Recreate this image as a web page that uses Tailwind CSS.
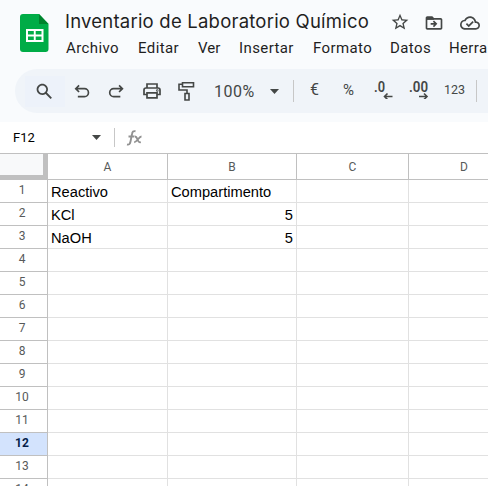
<!DOCTYPE html>
<html lang="es">
<head>
<meta charset="utf-8">
<title>Inventario de Laboratorio Químico</title>
<script src="https://cdn.jsdelivr.net/npm/@tailwindcss/browser@4"></script>
</head>
<body class="w-[488px] h-[486px] overflow-hidden bg-[#f9fbfd] font-['Liberation_Sans',Arial,sans-serif]">
<div class="flex h-[486px] w-[488px] flex-col overflow-hidden">
  <header class="flex h-[69px] shrink-0">
    <svg class="ml-5 mt-[14px] h-[38px] w-[29px] shrink-0" viewBox="0 0 29 38">
      <path d="M3 0H19L28.500 10V35a3 3 0 0 1-3 3H3a3 3 0 0 1-3-3V3a3 3 0 0 1 3-3z" fill="#00ac47"/>
      <path d="M19 0L28.500 10H19z" fill="#00832d"/>
      <path d="M6 15H23.500V28H6zM8 17V20.500H13.800V17zM15.700 17V20.500H21.500V17zM8 22.500V26H13.800V22.500zM15.700 22.500V26H21.500V22.500z" fill="#fff" fill-rule="evenodd"/>
    </svg>
    <div class="ml-4 flex flex-col">
      <div class="mt-[9px] flex h-6 items-center text-[#444746]">
        <h1 class="w-[325px] whitespace-nowrap text-[18.500px] leading-6 tracking-[0.22px] text-[#1f1f1f] font-[Inter,sans-serif]">Inventario de Laboratorio Químico</h1>
        <svg class="mt-0.5 h-5 w-5 shrink-0" viewBox="0 0 24 24" fill="currentColor"><path d="M22 9.240l-7.190-.62L12 2 9.190 8.630 2 9.240l5.460 4.730L5.820 21 12 17.270 18.180 21l-1.630-7.030L22 9.240zM12 15.400l-3.760 2.270 1-4.280-3.320-2.880 4.380-.38L12 6.100l1.710 4.040 4.380.38-3.320 2.880 1 4.280L12 15.400z"/></svg>
        <svg class="ml-[14px] mt-[3px] h-5 w-5 shrink-0" viewBox="0 0 24 24" fill="currentColor"><path d="M20 6h-8l-2-2H4c-1.100 0-2 .9-2 2v12c0 1.100.9 2 2 2h16c1.100 0 2-.9 2-2V8c0-1.100-.9-2-2-2zm0 12H4V8h16v10zm-8-1l4-4-4-4-1.410 1.410L12.170 12H8v2h4.170l-1.580 1.590L12 17z"/><path d="M3 5h7l2 2v1H3z"/></svg>
        <svg class="ml-4 mt-[3px] h-5 w-5 shrink-0" viewBox="0 0 24 24" fill="currentColor"><path d="M19.350 10.040C18.670 6.590 15.640 4 12 4 9.110 4 6.600 5.640 5.350 8.040 2.340 8.360 0 10.910 0 14c0 3.310 2.690 6 6 6h13c2.760 0 5-2.240 5-5 0-2.640-2.050-4.780-4.650-4.960zM19 18H6c-2.210 0-4-1.790-4-4 0-2.050 1.530-3.760 3.560-3.970l1.070-.11.5-.95C8.080 7.140 9.940 6 12 6c2.620 0 4.880 1.860 5.390 4.430l.3 1.500 1.530.11c1.560.1 2.780 1.410 2.780 2.960 0 1.650-1.350 3-3 3zM10.500 14.170l-2.090-2.090L7 13.500l3.500 3.500 6.010-6.010-1.410-1.410z"/></svg>
      </div>
      <nav class="mt-[5px] flex h-5 items-center whitespace-nowrap pl-px text-[15px] leading-5 text-[#1f1f1f] font-[Roboto,sans-serif]">
        <span class="w-[72px] tracking-[0.4px]">Archivo</span>
        <span class="w-[60px] tracking-[0.4px]">Editar</span>
        <span class="w-[41px]">Ver</span>
        <span class="w-[74px] tracking-[0.4px]">Insertar</span>
        <span class="w-[77px] tracking-[0.4px]">Formato</span>
        <span class="w-[59px] tracking-[0.4px]">Datos</span>
        <span class="tracking-[0.35px]">Herra</span>
      </nav>
    </div>
  </header>

  <div class="ml-[15px] flex h-11 w-[600px] shrink-0 items-center rounded-l-full bg-[#f0f4f9] text-[#444746]">
    <div class="ml-[10px] flex h-[31px] w-10 items-center justify-center bg-[#edf2fa]">
      <svg class="ml-[-2px] h-[21px] w-[21px]" viewBox="0 0 24 24" fill="currentColor"><path d="M20.490 19l-5.730-5.730C15.530 12.200 16 10.910 16 9.500 16 5.910 13.090 3 9.500 3S3 5.910 3 9.500 5.910 16 9.500 16c1.410 0 2.700-.47 3.770-1.240L19 20.490 20.490 19zM5 9.500C5 7.010 7.010 5 9.500 5S14 7.010 14 9.500 11.990 14 9.500 14 5 11.990 5 9.500z"/></svg>
    </div>
    <svg class="ml-[7px] mt-0.5 h-5 w-5 shrink-0" viewBox="0 0 24 24" fill="none" stroke="currentColor" stroke-width="2"><path d="M8.500 4L4.500 8l4 4M5 8h10a4.500 4.500 0 0 1 0 9.500H7"/></svg>
    <svg class="ml-[15px] mt-0.5 h-5 w-5 shrink-0" viewBox="0 0 24 24" fill="none" stroke="currentColor" stroke-width="2"><path d="M14.500 4l4 4-4 4M18 8H8a4.500 4.500 0 0 0 0 9.500h8"/></svg>
    <svg class="ml-[15px] h-5 w-5 shrink-0" viewBox="0 0 20 20" fill="none" stroke="currentColor" stroke-width="1.700"><path d="M5 6.500V3h10v3.500M5 13.500H2V9a2 2 0 0 1 2-2h12a2 2 0 0 1 2 2v4.500h-3M5 11.800h10v5H5z"/><circle cx="15.300" cy="9.500" r=".4"/></svg>
    <svg class="ml-[14px] h-5 w-5 shrink-0" viewBox="0 0 20 20" fill="none" stroke="currentColor" stroke-width="1.600"><path d="M6.500 1.800h11v4h-11zM6.500 3.300H3V9h8v3.500M9 12.500h4V19H9z"/></svg>
    <span class="ml-[18px] mt-0.5 w-[56px] whitespace-nowrap text-[16px] tracking-[0.5px] font-[Roboto,sans-serif]">100%</span>
    <svg class="h-[5px] w-[9px] shrink-0" viewBox="0 0 9 5"><path d="M0 0h9L4.500 5z" fill="currentColor"/></svg>
    <span class="ml-[14px] h-[22px] w-px bg-[#c7c7c7]"></span>
    <span class="ml-4 mb-0.5 w-[33px] text-[16px] font-[Roboto,sans-serif]">€</span>
    <span class="mb-0.5 w-[31px] text-[15px] font-[Roboto,sans-serif]">%</span>
    <svg class="mb-1 h-5 w-[22px] shrink-0 font-[Roboto,sans-serif]" viewBox="0 0 22 20"><text x="0" y="13" font-size="14" font-weight="600" fill="currentColor" textLength="11" lengthAdjust="spacingAndGlyphs">.0</text><path d="M18.500 17.500H11M13.500 14.500l-3 3 3 3" fill="none" stroke="currentColor" stroke-width="1.600"/></svg>
    <svg class="ml-[13px] mb-1 h-5 w-[22px] shrink-0 font-[Roboto,sans-serif]" viewBox="0 0 22 20"><text x="0" y="13" font-size="14" font-weight="600" fill="currentColor" textLength="19" lengthAdjust="spacingAndGlyphs">.00</text><path d="M10 17.500h7.500M15 14.500l3 3-3 3" fill="none" stroke="currentColor" stroke-width="1.600"/></svg>
    <span class="ml-[13px] mb-0.5 w-8 text-[12.500px] font-[Roboto,sans-serif]">123</span>
    <span class="h-[22px] w-px shrink-0 bg-[#c7c7c7]"></span>
  </div>

  <div class="mt-[9px] flex h-8 shrink-0 items-center border-b border-[#c0c0c0] bg-white">
    <span class="ml-[13px] w-[79px] text-[13px] text-black font-[Roboto,sans-serif]">F12</span>
    <svg class="h-[5px] w-[9px] shrink-0" viewBox="0 0 9 5"><path d="M0 0h9L4.500 5z" fill="#444746"/></svg>
    <span class="ml-[13px] h-[19px] w-px bg-[#c7c7c7]"></span>
    <svg class="ml-[11px] h-[18px] w-[18px]" viewBox="0 0 18 18" fill="none" stroke="#919191" stroke-width="1.900"><path d="M1 15.500c2 .5 3-.5 3.500-3L6 5c.4-2.300 1.300-3.200 3.500-2.700M2.500 7.500H8M8.500 7.500c2-.5 2.200 1 3 3 .8 2.200 1.200 3.200 3.300 2.700M15.500 7.500c-2.500 0-4.600 5.700-7.300 5.700"/></svg>
  </div>

  <table class="w-[520px] shrink-0 table-fixed border-separate border-spacing-0 bg-white text-[14.670px] text-black">
    <colgroup><col class="w-12"><col class="w-[120px]"><col class="w-[129px]"><col class="w-[112px]"><col class="w-[111px]"></colgroup>
    <thead id="columns"></thead>
    <tbody id="rows"></tbody>
  </table>
</div>
<script>
  const head = '<th class="h-[26px] border-r border-b border-[#c0c0c0] p-0 text-[12px] font-normal text-[#575a5a] font-[Roboto,sans-serif]">';
  document.getElementById('columns').innerHTML =
    '<tr><th class="h-[26px] border-r-[5px] border-b-[5px] border-[#c0c0c0] bg-[#f8f9fa] p-0"></th>' +
    ['A', 'B', 'C', 'D'].map(c => head + c + '</th>').join('') + '</tr>';
  const data = [['Reactivo', 'Compartimento'], ['KCl', '5'], ['NaOH', '5']];
  let html = '';
  for (let r = 1; r <= 14; r++) {
    const state = r === 12 ? 'bg-[#d3e3fd] font-bold text-[#041e49]' : 'font-normal text-[#575a5a]';
    html += '<tr><th class="h-[23px] border-r border-b border-[#c0c0c0] p-0 pr-[3px] pb-0.5 text-[12px] leading-[18px] font-[Roboto,sans-serif] ' + state + '">' + r + '</th>';
    for (let c = 0; c < 4; c++) {
      const value = (data[r - 1] || [])[c] || '';
      html += '<td class="h-[23px] border-r border-b border-[#e1e1e1] px-[3px] pt-0.5 pb-0 leading-[20px] ' + (value === '5' ? 'text-right' : 'text-left') + '">' + value + '</td>';
    }
    html += '</tr>';
  }
  document.getElementById('rows').innerHTML = html;
</script>
</body>
</html>
